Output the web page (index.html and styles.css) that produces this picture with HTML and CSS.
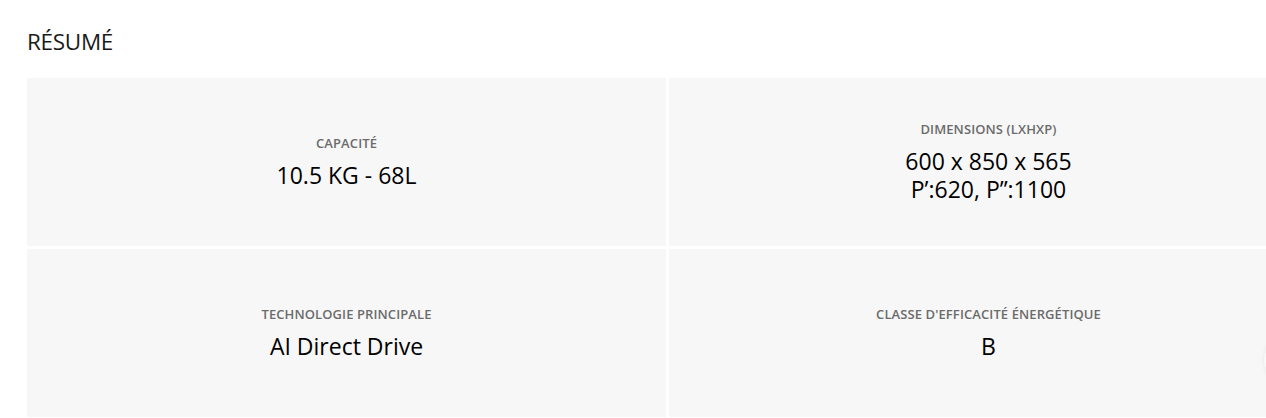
FILE: index.html
```html
<!DOCTYPE html>
<html lang="fr">
<head>
<meta charset="utf-8">
<link rel="stylesheet" href="styles.css">
</head>
<body>
<section class="summary">
  <h2 class="summary-title">RÉSUMÉ</h2>
  <div class="spec-grid">
    <div class="spec-card">
      <div class="spec-label">CAPACITÉ</div>
      <div class="spec-value">10.5 KG - 68L</div>
    </div>
    <div class="spec-card">
      <div class="spec-label">DIMENSIONS (LXHXP)</div>
      <div class="spec-value">600 x 850 x 565<br>P’:620, P’’:1100</div>
    </div>
    <div class="spec-card">
      <div class="spec-label">TECHNOLOGIE PRINCIPALE</div>
      <div class="spec-value">AI Direct Drive</div>
    </div>
    <div class="spec-card">
      <div class="spec-label">CLASSE D'EFFICACITÉ ÉNERGÉTIQUE</div>
      <div class="spec-value">B</div>
    </div>
  </div>
</section>
<div class="float-btn"></div>
</body>
</html>
```
FILE: styles.css
```css
html, body {
  margin: 0;
  padding: 0;
  background: #ffffff;
  overflow: hidden;
}
body {
  font-family: "Open Sans", "Noto Sans", sans-serif;
  color: #000;
  width: 1266px;
  height: 418px;
  position: relative;
}
.summary {
  padding: 27px 0 0 27px;
}
.summary-title {
  margin: 0;
  font-size: 22.5px;
  font-weight: 500;
  line-height: 30px;
  color: #1a1a1a;
  letter-spacing: -0.3px;
}
.spec-grid {
  margin-top: 21px;
  display: grid;
  grid-template-columns: 639px 639px;
  grid-auto-rows: 168px;
  gap: 3px;
}
.spec-card {
  background: #f7f7f7;
  display: flex;
  flex-direction: column;
  align-items: center;
  justify-content: center;
  text-align: center;
}
.spec-label {
  font-size: 13px;
  font-weight: 600;
  color: #6b6b6b;
  line-height: 16px;
  letter-spacing: 0.1px;
  margin-top: 0;
}
.spec-value {
  margin-top: 10px;
  font-size: 23px;
  line-height: 28px;
  color: #000;
}
.float-btn {
  position: absolute;
  right: -46px;
  top: 336px;
  width: 48px;
  height: 48px;
  border-radius: 50%;
  background: #f9f9f9;
  box-shadow: 0 0 5px rgba(0,0,0,0.07);
}
```
